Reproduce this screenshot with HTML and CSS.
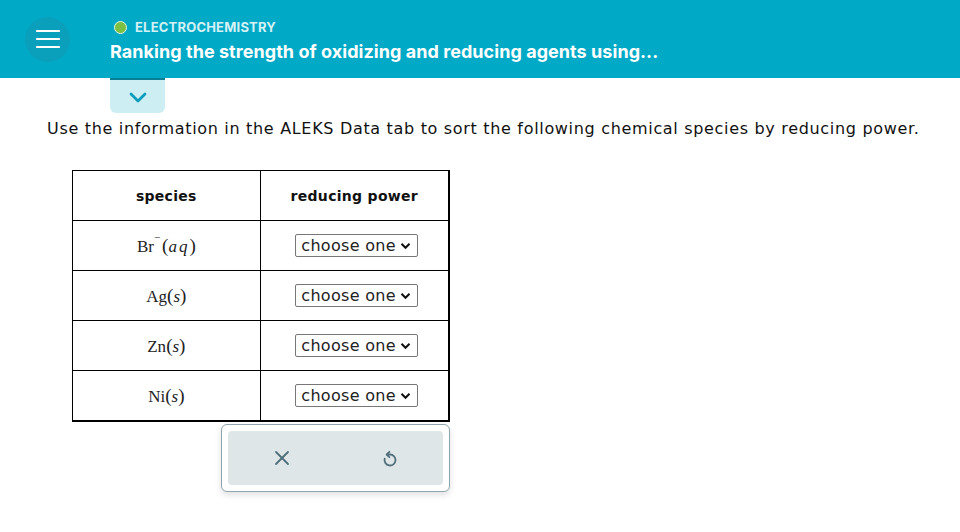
FILE: index.html
```html
<!DOCTYPE html>
<html>
<head>
<meta charset="utf-8">
<link rel="stylesheet" href="styles.css">
</head>
<body>
<header class="topbar">
  <button class="menu-btn" aria-label="menu">
    <svg width="26" height="22" viewBox="0 0 26 22"><g stroke="#fff" stroke-width="2.2" stroke-linecap="round"><line x1="2" y1="3" x2="24" y2="3"/><line x1="2" y1="11" x2="24" y2="11"/><line x1="2" y1="19" x2="24" y2="19"/></g></svg>
  </button>
  <div class="titles">
    <div class="topic"><span class="dot"></span>ELECTROCHEMISTRY</div>
    <div class="title">Ranking the strength of oxidizing and reducing agents using...</div>
  </div>
</header>
<div class="tab-row">
  <div class="drop-tab">
    <svg width="20" height="13" viewBox="0 0 20 13"><polyline points="3,3 10,10 17,3" fill="none" stroke="#0a9cbb" stroke-width="2.8" stroke-linecap="round" stroke-linejoin="round"/></svg>
  </div>
</div>
<p class="instr">Use the information in the ALEKS Data tab to sort the following chemical species by reducing power.</p>
<div class="work">
  <table class="grid">
    <tr><th>species</th><th>reducing power</th></tr>
    <tr><td class="chem">Br<sup>&#8722;</sup><span class="par">(</span><i class="aq">aq</i><span class="par">)</span></td><td><div class="sel">choose one<svg width="11" height="8" viewBox="0 0 11 8"><polyline points="1.5,1.8 5.5,5.8 9.5,1.8" fill="none" stroke="#111" stroke-width="2"/></svg></div></td></tr>
    <tr><td class="chem">Ag<span class="par">(</span><i>s</i><span class="par">)</span></td><td><div class="sel">choose one<svg width="11" height="8" viewBox="0 0 11 8"><polyline points="1.5,1.8 5.5,5.8 9.5,1.8" fill="none" stroke="#111" stroke-width="2"/></svg></div></td></tr>
    <tr><td class="chem">Zn<span class="par">(</span><i>s</i><span class="par">)</span></td><td><div class="sel">choose one<svg width="11" height="8" viewBox="0 0 11 8"><polyline points="1.5,1.8 5.5,5.8 9.5,1.8" fill="none" stroke="#111" stroke-width="2"/></svg></div></td></tr>
    <tr><td class="chem">Ni<span class="par">(</span><i>s</i><span class="par">)</span></td><td><div class="sel">choose one<svg width="11" height="8" viewBox="0 0 11 8"><polyline points="1.5,1.8 5.5,5.8 9.5,1.8" fill="none" stroke="#111" stroke-width="2"/></svg></div></td></tr>
  </table>
  <div class="actions">
    <div class="actions-inner">
      <svg width="18" height="18" viewBox="0 0 18 18"><g stroke="#4f6f7b" stroke-width="1.8" stroke-linecap="round"><line x1="3" y1="3" x2="15" y2="15"/><line x1="15" y1="3" x2="3" y2="15"/></g></svg>
      <svg width="18" height="20" viewBox="0 0 18 20"><g fill="none" stroke="#4f6f7b" stroke-width="1.8" stroke-linecap="round" stroke-linejoin="round"><path d="M3.7 10.6 A5.5 5.5 0 1 0 9 6.5 L6 6.5"/><polyline points="8.4,3.8 5.7,6.5 8.4,9.2"/></g></svg>
    </div>
  </div>
</div>
</body>
</html>
```
FILE: styles.css
```css
html, body { margin: 0; padding: 0; background: #fff; }
body { width: 960px; height: 532px; overflow: hidden; font-family: "DejaVu Sans", Verdana, sans-serif; }
.topbar { height: 78px; background: #00aac7; display: flex; align-items: center; }
.menu-btn { width: 45px; height: 45px; margin-left: 25px; border-radius: 50%; background: #0a9fbb; border: none; padding: 0; display: flex; align-items: center; justify-content: center; }
.titles { margin-left: 40px; display: flex; flex-direction: column; margin-top: 3px; }
.topic { display: flex; align-items: center; font-family: "Inter", "Open Sans", sans-serif; font-weight: 700; font-size: 13px; letter-spacing: 0.2px; color: #d6f1f6; height: 16px; }
.dot { width: 13px; height: 13px; border-radius: 50%; background: #7bbf43; border: 1.5px solid #e8f6e0; margin-left: 4px; margin-right: 8px; box-sizing: border-box; }
.title { font-family: "Inter", "Open Sans", sans-serif; font-weight: 700; font-size: 18px; letter-spacing: 0.05px; color: #fff; margin-top: 6px; }
.tab-row { padding-left: 110px; }
.drop-tab { width: 55px; height: 35px; background: #cdeef3; border-top: 2px solid #087f95; box-sizing: border-box; border-radius: 0 0 6px 6px; display: flex; align-items: center; justify-content: center; padding-top: 2px; }
.instr { margin: 5px 0 0 47px; font-size: 16px; color: #111; letter-spacing: 0.68px; height: 22px; line-height: 22px; white-space: nowrap; }
.work { margin: 30px 0 0 72px; width: 378px; }
.grid { border-collapse: collapse; width: 378px; border-right: 2px solid #000; border-bottom: 2px solid #000; }
.grid th, .grid td { border: 1px solid #000; width: 188px; height: 49px; padding: 0; text-align: center; }
.grid th { font-size: 14px; font-weight: 700; color: #111; height: 49px; letter-spacing: 0.3px; }
.chem { font-family: "Liberation Serif", "Times New Roman", serif; font-size: 17px; color: #222; }
.chem i { font-style: italic; }
.chem i.aq { letter-spacing: 2px; }
.chem .par { font-size: 19px; }
.chem sup { font-size: 11px; position: relative; top: -4px; margin-right: 2px; }
.sel { display: inline-flex; align-items: center; width: 123px; height: 23px; box-sizing: border-box; font-size: 16px; letter-spacing: 0.3px; color: #222; border: 1px solid #777; border-radius: 2px; background: #fff; padding: 0 0 0 5px; margin-left: 5px; gap: 4px; }
.sel svg { flex: none; }
.actions { margin: 2px 0 0 149px; width: 229px; height: 68px; box-sizing: border-box; border: 1px solid #8ea5ad; border-radius: 6px; background: #fff; padding: 6px; box-shadow: 0 3px 6px rgba(0,0,0,0.12); }
.actions-inner { height: 100%; background: #dfe6e8; border-radius: 4px; display: flex; align-items: center; justify-content: space-between; padding: 0 44px 0 45px; }
```
